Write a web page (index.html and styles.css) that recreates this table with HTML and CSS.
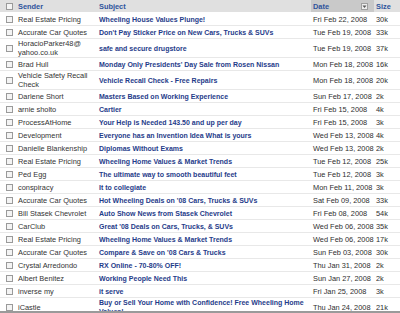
FILE: index.html
```html
<!DOCTYPE html>
<html>
<head>
<meta charset="utf-8">
<link rel="stylesheet" href="styles.css">
</head>
<body>
<div class="frame">
<table class="mail">
<colgroup>
<col class="c-cb"><col class="c-sender"><col class="c-subject"><col class="c-date"><col class="c-size">
</colgroup>
<thead>
<tr>
<th class="cb"><span class="box"></span></th>
<th>Sender</th>
<th>Subject</th>
<th class="date-h"><span class="dh">Date<span class="dd"><svg width="5" height="5" viewBox="0 0 5 5"><path d="M0.5 1.5 L4.5 1.5 L2.5 4 Z" fill="#555"/></svg></span></span></th>
<th>Size</th>
</tr>
</thead>
<tbody>
<tr><td class="cb"><span class="box"></span></td><td class="s">Real Estate Pricing</td><td class="sub">Wheeling House Values Plunge!</td><td class="d">Fri Feb 22, 2008</td><td class="d">30k</td></tr>
<tr><td class="cb"><span class="box"></span></td><td class="s">Accurate Car Quotes</td><td class="sub">Don't Pay Sticker Price on New Cars, Trucks &amp; SUVs</td><td class="d">Tue Feb 19, 2008</td><td class="d">33k</td></tr>
<tr><td class="cb"><span class="box"></span></td><td class="s">HoracioParker48@<wbr>yahoo.co.uk</td><td class="sub">safe and secure drugstore</td><td class="d">Tue Feb 19, 2008</td><td class="d">37k</td></tr>
<tr><td class="cb"><span class="box"></span></td><td class="s">Brad Hull</td><td class="sub">Monday Only Presidents' Day Sale from Rosen Nissan</td><td class="d">Mon Feb 18, 2008</td><td class="d">16k</td></tr>
<tr><td class="cb"><span class="box"></span></td><td class="s">Vehicle Safety Recall Check</td><td class="sub">Vehicle Recall Check - Free Repairs</td><td class="d">Mon Feb 18, 2008</td><td class="d">20k</td></tr>
<tr><td class="cb"><span class="box"></span></td><td class="s">Darlene Short</td><td class="sub">Masters Based on Working Experience</td><td class="d">Sun Feb 17, 2008</td><td class="d">2k</td></tr>
<tr><td class="cb"><span class="box"></span></td><td class="s">arnie sholto</td><td class="sub">Cartier</td><td class="d">Fri Feb 15, 2008</td><td class="d">4k</td></tr>
<tr><td class="cb"><span class="box"></span></td><td class="s">ProcessAtHome</td><td class="sub">Your Help is Needed 143.50 and up per day</td><td class="d">Fri Feb 15, 2008</td><td class="d">3k</td></tr>
<tr><td class="cb"><span class="box"></span></td><td class="s">Development</td><td class="sub">Everyone has an Invention Idea What is yours</td><td class="d">Wed Feb 13, 2008</td><td class="d">4k</td></tr>
<tr><td class="cb"><span class="box"></span></td><td class="s">Danielle Blankenship</td><td class="sub">Diplomas Without Exams</td><td class="d">Wed Feb 13, 2008</td><td class="d">2k</td></tr>
<tr><td class="cb"><span class="box"></span></td><td class="s">Real Estate Pricing</td><td class="sub">Wheeling Home Values &amp; Market Trends</td><td class="d">Tue Feb 12, 2008</td><td class="d">25k</td></tr>
<tr><td class="cb"><span class="box"></span></td><td class="s">Ped Egg</td><td class="sub">The ultimate way to smooth beautiful feet</td><td class="d">Tue Feb 12, 2008</td><td class="d">3k</td></tr>
<tr><td class="cb"><span class="box"></span></td><td class="s">conspiracy</td><td class="sub">It to collegiate</td><td class="d">Mon Feb 11, 2008</td><td class="d">3k</td></tr>
<tr><td class="cb"><span class="box"></span></td><td class="s">Accurate Car Quotes</td><td class="sub">Hot Wheeling Deals on '08 Cars, Trucks &amp; SUVs</td><td class="d">Sat Feb 09, 2008</td><td class="d">33k</td></tr>
<tr><td class="cb"><span class="box"></span></td><td class="s">Bill Stasek Chevrolet</td><td class="sub">Auto Show News from Stasek Chevrolet</td><td class="d">Fri Feb 08, 2008</td><td class="d">54k</td></tr>
<tr><td class="cb"><span class="box"></span></td><td class="s">CarClub</td><td class="sub">Great '08 Deals on Cars, Trucks, &amp; SUVs</td><td class="d">Wed Feb 06, 2008</td><td class="d">35k</td></tr>
<tr><td class="cb"><span class="box"></span></td><td class="s">Real Estate Pricing</td><td class="sub">Wheeling Home Values &amp; Market Trends</td><td class="d">Wed Feb 06, 2008</td><td class="d">17k</td></tr>
<tr><td class="cb"><span class="box"></span></td><td class="s">Accurate Car Quotes</td><td class="sub">Compare &amp; Save on '08 Cars &amp; Trucks</td><td class="d">Sun Feb 03, 2008</td><td class="d">30k</td></tr>
<tr><td class="cb"><span class="box"></span></td><td class="s">Crystal Arredondo</td><td class="sub">RX Online - 70-80% OFF!</td><td class="d">Thu Jan 31, 2008</td><td class="d">2k</td></tr>
<tr><td class="cb"><span class="box"></span></td><td class="s">Albert Benitez</td><td class="sub">Working People Need This</td><td class="d">Sun Jan 27, 2008</td><td class="d">2k</td></tr>
<tr><td class="cb"><span class="box"></span></td><td class="s">inverse my</td><td class="sub">it serve</td><td class="d">Fri Jan 25, 2008</td><td class="d">3k</td></tr>
<tr><td class="cb"><span class="box"></span></td><td class="s">iCastle</td><td class="sub">Buy or Sell Your Home with Confidence! Free Wheeling Home Values!</td><td class="d">Thu Jan 24, 2008</td><td class="d">21k</td></tr>
</tbody>
</table>
</div>
</body>
</html>
```
FILE: styles.css
```css
html, body {
  margin: 0;
  padding: 0;
  background: #fff;
}
body {
  font-family: "Liberation Sans", Arial, sans-serif;
  font-size: 7.4px;
  color: #333;
}
.frame {
  width: 400px;
  height: 313px;
  box-sizing: border-box;
  border-bottom: 2px solid #9a9a9a;
  overflow: hidden;
}
.mail {
  width: 400px;
  table-layout: fixed;
  border-collapse: collapse;
}
.c-cb { width: 16px; }
.c-sender { width: 81px; }
.c-subject { width: 214px; }
.c-date { width: 63px; }
.c-size { width: 26px; }

th {
  height: 12px;
  padding: 0 0 0 2px;
  background: #e0e0e0;
  color: #2f549c;
  font-weight: bold;
  text-align: left;
  line-height: 9px;
  vertical-align: middle;
  border-bottom: 1px solid #fff;
}
th.date-h {
  background: #c9c9c9;
}
.dh {
  display: flex;
  align-items: center;
  justify-content: space-between;
  padding-right: 6px;
}
.dd {
  width: 5px;
  height: 5px;
  border: 1px solid #a0a0a0;
  background: #eee;
  display: flex;
}
td {
  height: 12px;
  padding: 0 0 0 2px;
  line-height: 9px;
  vertical-align: middle;
  border-bottom: 1px solid #e8e8e8;
}
th.cb, td.cb {
  padding: 0 0 0 6px;
}
.box {
  display: block;
  width: 5px;
  height: 5px;
  border: 1px solid #9a9a9a;
  background: #f4f4f4;
}
td.s {
  color: #333;
}
td.sub {
  color: #1f3c8a;
  font-weight: bold;
  font-size: 7px;
}
td.d {
  color: #2e2e2e;
  white-space: nowrap;
}
```
